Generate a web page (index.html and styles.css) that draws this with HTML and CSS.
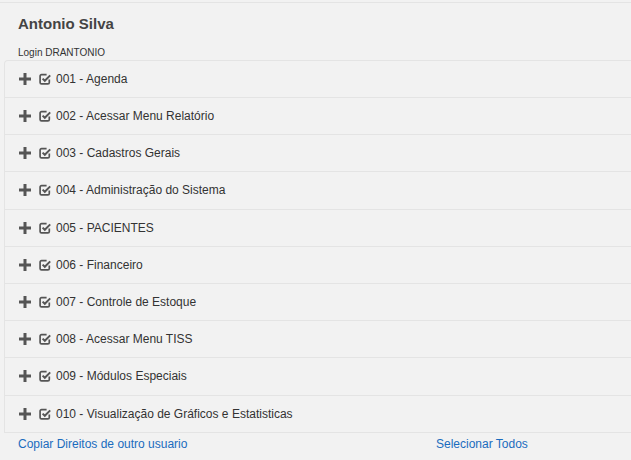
FILE: index.html
```html
<!DOCTYPE html>
<html>
<head>
<meta charset="utf-8">
<link rel="stylesheet" href="styles.css">
</head>
<body>
<div class="panel">
  <div class="header">
    <h3 class="name">Antonio Silva</h3>
    <div class="login">Login DRANTONIO</div>
  </div>
  <ul class="list">
    <li class="item"><span class="plus"><svg viewBox="0 0 12 12" width="12" height="12"><path d="M4.5 0h3v4.5H12v3H7.5V12h-3V7.5H0v-3h4.5z" fill="#555"/></svg></span><span class="chk"><svg viewBox="0 0 12 12" width="12" height="12"><path d="M10.3 6.6v2.9a1.4 1.4 0 0 1-1.4 1.4H2.5A1.4 1.4 0 0 1 1.1 9.5V3A1.4 1.4 0 0 1 2.5 1.6H7.6" fill="none" stroke="#555" stroke-width="1.7"/><path d="M3.6 5.6l2.2 2.2 5.4-5.4" fill="none" stroke="#555" stroke-width="2"/></svg></span><span class="label">001 - Agenda</span></li>
    <li class="item"><span class="plus"><svg viewBox="0 0 12 12" width="12" height="12"><path d="M4.5 0h3v4.5H12v3H7.5V12h-3V7.5H0v-3h4.5z" fill="#555"/></svg></span><span class="chk"><svg viewBox="0 0 12 12" width="12" height="12"><path d="M10.3 6.6v2.9a1.4 1.4 0 0 1-1.4 1.4H2.5A1.4 1.4 0 0 1 1.1 9.5V3A1.4 1.4 0 0 1 2.5 1.6H7.6" fill="none" stroke="#555" stroke-width="1.7"/><path d="M3.6 5.6l2.2 2.2 5.4-5.4" fill="none" stroke="#555" stroke-width="2"/></svg></span><span class="label">002 - Acessar Menu Relatório</span></li>
    <li class="item"><span class="plus"><svg viewBox="0 0 12 12" width="12" height="12"><path d="M4.5 0h3v4.5H12v3H7.5V12h-3V7.5H0v-3h4.5z" fill="#555"/></svg></span><span class="chk"><svg viewBox="0 0 12 12" width="12" height="12"><path d="M10.3 6.6v2.9a1.4 1.4 0 0 1-1.4 1.4H2.5A1.4 1.4 0 0 1 1.1 9.5V3A1.4 1.4 0 0 1 2.5 1.6H7.6" fill="none" stroke="#555" stroke-width="1.7"/><path d="M3.6 5.6l2.2 2.2 5.4-5.4" fill="none" stroke="#555" stroke-width="2"/></svg></span><span class="label">003 - Cadastros Gerais</span></li>
    <li class="item"><span class="plus"><svg viewBox="0 0 12 12" width="12" height="12"><path d="M4.5 0h3v4.5H12v3H7.5V12h-3V7.5H0v-3h4.5z" fill="#555"/></svg></span><span class="chk"><svg viewBox="0 0 12 12" width="12" height="12"><path d="M10.3 6.6v2.9a1.4 1.4 0 0 1-1.4 1.4H2.5A1.4 1.4 0 0 1 1.1 9.5V3A1.4 1.4 0 0 1 2.5 1.6H7.6" fill="none" stroke="#555" stroke-width="1.7"/><path d="M3.6 5.6l2.2 2.2 5.4-5.4" fill="none" stroke="#555" stroke-width="2"/></svg></span><span class="label">004 - Administração do Sistema</span></li>
    <li class="item"><span class="plus"><svg viewBox="0 0 12 12" width="12" height="12"><path d="M4.5 0h3v4.5H12v3H7.5V12h-3V7.5H0v-3h4.5z" fill="#555"/></svg></span><span class="chk"><svg viewBox="0 0 12 12" width="12" height="12"><path d="M10.3 6.6v2.9a1.4 1.4 0 0 1-1.4 1.4H2.5A1.4 1.4 0 0 1 1.1 9.5V3A1.4 1.4 0 0 1 2.5 1.6H7.6" fill="none" stroke="#555" stroke-width="1.7"/><path d="M3.6 5.6l2.2 2.2 5.4-5.4" fill="none" stroke="#555" stroke-width="2"/></svg></span><span class="label">005 - PACIENTES</span></li>
    <li class="item"><span class="plus"><svg viewBox="0 0 12 12" width="12" height="12"><path d="M4.5 0h3v4.5H12v3H7.5V12h-3V7.5H0v-3h4.5z" fill="#555"/></svg></span><span class="chk"><svg viewBox="0 0 12 12" width="12" height="12"><path d="M10.3 6.6v2.9a1.4 1.4 0 0 1-1.4 1.4H2.5A1.4 1.4 0 0 1 1.1 9.5V3A1.4 1.4 0 0 1 2.5 1.6H7.6" fill="none" stroke="#555" stroke-width="1.7"/><path d="M3.6 5.6l2.2 2.2 5.4-5.4" fill="none" stroke="#555" stroke-width="2"/></svg></span><span class="label">006 - Financeiro</span></li>
    <li class="item"><span class="plus"><svg viewBox="0 0 12 12" width="12" height="12"><path d="M4.5 0h3v4.5H12v3H7.5V12h-3V7.5H0v-3h4.5z" fill="#555"/></svg></span><span class="chk"><svg viewBox="0 0 12 12" width="12" height="12"><path d="M10.3 6.6v2.9a1.4 1.4 0 0 1-1.4 1.4H2.5A1.4 1.4 0 0 1 1.1 9.5V3A1.4 1.4 0 0 1 2.5 1.6H7.6" fill="none" stroke="#555" stroke-width="1.7"/><path d="M3.6 5.6l2.2 2.2 5.4-5.4" fill="none" stroke="#555" stroke-width="2"/></svg></span><span class="label">007 - Controle de Estoque</span></li>
    <li class="item"><span class="plus"><svg viewBox="0 0 12 12" width="12" height="12"><path d="M4.5 0h3v4.5H12v3H7.5V12h-3V7.5H0v-3h4.5z" fill="#555"/></svg></span><span class="chk"><svg viewBox="0 0 12 12" width="12" height="12"><path d="M10.3 6.6v2.9a1.4 1.4 0 0 1-1.4 1.4H2.5A1.4 1.4 0 0 1 1.1 9.5V3A1.4 1.4 0 0 1 2.5 1.6H7.6" fill="none" stroke="#555" stroke-width="1.7"/><path d="M3.6 5.6l2.2 2.2 5.4-5.4" fill="none" stroke="#555" stroke-width="2"/></svg></span><span class="label">008 - Acessar Menu TISS</span></li>
    <li class="item"><span class="plus"><svg viewBox="0 0 12 12" width="12" height="12"><path d="M4.5 0h3v4.5H12v3H7.5V12h-3V7.5H0v-3h4.5z" fill="#555"/></svg></span><span class="chk"><svg viewBox="0 0 12 12" width="12" height="12"><path d="M10.3 6.6v2.9a1.4 1.4 0 0 1-1.4 1.4H2.5A1.4 1.4 0 0 1 1.1 9.5V3A1.4 1.4 0 0 1 2.5 1.6H7.6" fill="none" stroke="#555" stroke-width="1.7"/><path d="M3.6 5.6l2.2 2.2 5.4-5.4" fill="none" stroke="#555" stroke-width="2"/></svg></span><span class="label">009 - Módulos Especiais</span></li>
    <li class="item"><span class="plus"><svg viewBox="0 0 12 12" width="12" height="12"><path d="M4.5 0h3v4.5H12v3H7.5V12h-3V7.5H0v-3h4.5z" fill="#555"/></svg></span><span class="chk"><svg viewBox="0 0 12 12" width="12" height="12"><path d="M10.3 6.6v2.9a1.4 1.4 0 0 1-1.4 1.4H2.5A1.4 1.4 0 0 1 1.1 9.5V3A1.4 1.4 0 0 1 2.5 1.6H7.6" fill="none" stroke="#555" stroke-width="1.7"/><path d="M3.6 5.6l2.2 2.2 5.4-5.4" fill="none" stroke="#555" stroke-width="2"/></svg></span><span class="label">010 - Visualização de Gráficos e Estatisticas</span></li>
  </ul>
  <div class="footer">
    <a class="link link-copy" href="#">Copiar Direitos de outro usuario</a>
    <a class="link link-all" href="#">Selecionar Todos</a>
  </div>
</div>
</body>
</html>
```
FILE: styles.css
```css
html, body {
  margin: 0;
  padding: 0;
  background: #f2f2f2;
  font-family: "Liberation Sans", Arial, sans-serif;
  color: #333;
  overflow: hidden;
}
.panel {
  margin-top: 2px;
  border-top: 1px solid #e4e4e4;
}
.header {
  padding: 11px 0 1px 18px;
}
.name {
  margin: 0 0 13px;
  font-size: 15px;
  font-weight: bold;
  color: #444;
  line-height: 20px;
}
.login {
  font-size: 10px;
  line-height: 12px;
  color: #333;
}
.list {
  list-style: none;
  margin: 0 -20px 0 4px;
  padding: 0;
  border: 1px solid #e4e4e4;
  border-bottom: 0;
  border-radius: 4px 4px 0 0;
}
.item {
  display: flex;
  align-items: center;
  height: 36.2px;
  padding-left: 14px;
  border-bottom: 1px solid #e4e4e4;
  font-size: 12px;
  color: #333;
}
.list .item:first-child {
  height: 36px;
}
.plus {
  display: flex;
  width: 12px;
  height: 12px;
  margin-right: 8px;
}
.chk {
  display: flex;
  width: 12px;
  height: 12px;
  margin-right: 5px;
}
.label {
  white-space: nowrap;
}
.footer {
  display: flex;
  padding: 3px 0 0 18px;
  font-size: 12px;
  line-height: 16px;
}
.link {
  color: #1a6cbe;
  text-decoration: none;
}
.link-copy {
  width: 418px;
}
```
